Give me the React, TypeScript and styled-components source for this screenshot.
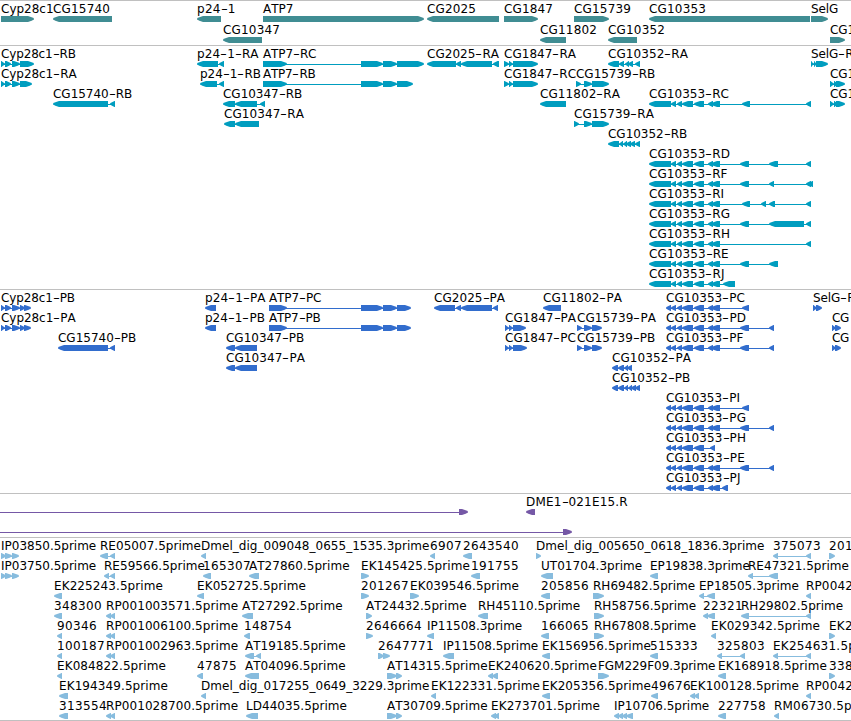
import React from "react";
import styled, { createGlobalStyle } from "styled-components";

const GlobalStyle = createGlobalStyle`
  html, body { margin: 0; padding: 0; background: #fff; overflow: hidden; }
`;

const Browser = styled.main`
  width: 851px;
  height: 721px;
  overflow: hidden;
  display: flex;
  flex-direction: column;
  background: #fff;
  border-bottom: 1px solid #c0c0c0;
  box-sizing: border-box;
`;

const TrackPanel = styled.section<{ $pad: number }>`
  display: flex;
  flex-direction: column;
  flex: none;
  border-top: 1px solid #c0c0c0;
  padding-bottom: ${(p) => p.$pad}px;
`;

const Lane = styled.div<{ $height: number }>`
  display: grid;
  grid-template-columns: minmax(0, 1fr);
  height: ${(p) => p.$height}px;
`;

const FeatureBox = styled.div<{ $x: number }>`
  grid-area: 1 / 1;
  margin-left: ${(p) => p.$x}px;
  display: flex;
  flex-direction: column;
  align-items: flex-start;
`;

const Label = styled.span<{ $tracking: string }>`
  height: 15px;
  line-height: 17px;
  font-family: "DejaVu Sans", sans-serif;
  font-size: 12px;
  font-kerning: none;
  letter-spacing: ${(p) => p.$tracking}px;
  color: #000;
  white-space: pre;
`;

const Dash = styled.span`
  display: inline-block;
  width: 7px;
  transform: scaleX(1.6);
  transform-origin: 0 50%;
`;

const Glyph = styled.svg`
  display: block;
  flex: none;
  height: 6px;
`;

type Strand = "+" | "-";
type Feature = { name: string; strand: Strand; blocks: number[][] };

/* Parses "name|strand|start:end,start:end" into a feature. */
const parse = (line: string): Feature => {
  const [name, strand, spans] = line.split("|");
  return {
    name,
    strand: strand as Strand,
    blocks: spans.split(",").map((s) => s.split(":").map(Number)),
  };
};

/* Advance corrections per character, spread evenly over a label. */
const advance: Record<string, number> = {
  _: -0.3, C: -0.38, G: -0.3, y: -0.1, c: -0.6, R: -0.34, P: -0.24, B: -1,
  I: -0.5, A: -0.2, E: 0.2, K: 0.1, D: -0.24, F: -0.5, m: -1.6,
};

const tracking = (name: string) => {
  const chars = name.replace(/-/g, "").split("");
  const extra = chars.reduce((sum, c) => sum + (/\d/.test(c) ? 0.37 : advance[c] ?? 0), 0);
  return (extra / Math.max(1, chars.length)).toFixed(2);
};

const blockPoints = (a: number, b: number, strand: Strand) => {
  const small = b - a <= 6;
  const head = small ? Math.min(5, b - a) - 0.5 : 6;
  const mid = small ? 2 : 2.4;
  const inset = small ? 1.3 : 1.3;
  const [tip, back, dir] = strand === "+" ? [b, a, -1] : [a, b, 1];
  return [
    [back, 0],
    [tip + dir * head, 0],
    [tip + dir * mid, inset],
    [tip, 2.6],
    [tip, 3.6],
    [tip + dir * mid, 6 - inset],
    [tip + dir * head, 6],
    [back, 6],
  ]
    .map((p) => p.join(","))
    .join(" ");
};

const FeatureView = ({ feature, color }: { feature: Feature; color: string }) => {
  const { name, strand, blocks } = feature;
  const x = blocks[0][0];
  const end = blocks[blocks.length - 1][1];
  return (
    <FeatureBox $x={x}>
      <Label $tracking={tracking(name)}>
        {name.split("-").map((part, i) => (
          <React.Fragment key={i}>
            {i > 0 && <Dash>-</Dash>}
            {part}
          </React.Fragment>
        ))}
      </Label>
      <Glyph width={end - x} height={6} viewBox={`0 0 ${end - x} 6`} fill={color}>
        {blocks.length > 1 && <rect x={1} y={3} width={end - x - 2} height={1} />}
        {blocks.map(([a, b], i) => (
          <polygon key={i} points={blockPoints(a - x, b - x, strand)} />
        ))}
      </Glyph>
    </FeatureBox>
  );
};

const CYP = "1:5,5:11,12:20";
const R353 = "649:671,671:676,677:682,682:693,694:704,708:713,711:720";
const P353 = "666:671,671:676,677:682,682:693,694:704,708:713,711:720";
const CG1 = "830:834,834:838,836:845";
const RP = "106:111,110:115";

const tracks: { color: string; lane: number; pad: number; lanes: string[][] }[] = [
  {
    color: "#408d93",
    lane: 21,
    pad: 2,
    lanes: [
      ["Cyp28c1|+|1:34", "CG15740|-|53:112", "p24-1|-|197:221", "ATP7|+|263:424", "CG2025|-|427:499", "CG1847|+|504:538", "CG15739|+|574:609", "CG10353|-|649:810", "SelG|+|811:828"],
      ["CG10347|-|223:262", "CG11802|-|540:566", "CG10352|-|608:637", "CG1|+|830:845"],
    ],
  },
  {
    color: "#009dbf",
    lane: 20,
    pad: 3,
    lanes: [
      [`Cyp28c1-RB|+|${CYP},20:34`, "p24-1-RA|-|197:218,219:224", "ATP7-RC|+|263:287,361:383,383:397,397:424", "CG2025-RA|-|427:456,456:461,461:492,493:499", "CG1847-RA|+|504:509,509:513,513:538", "CG10352-RA|-|608:619,619:624,625:629,628:633,635:640", "SelG-R|+|811:814,814:817,816:828"],
      [`Cyp28c1-RA|+|${CYP},20:32`, "p24-1-RB|-|200:217,219:224", "ATP7-RB|+|263:287,361:383,383:397,397:413", "CG1847-RC|+|504:509,509:513,513:538", "CG15739-RB|+|576:581,584:592,592:609", `CG1|+|${CG1}`],
      ["CG15740-RB|-|53:108,110:115", "CG10347-RB|-|223:235,235:257,260:265", "CG11802-RA|-|540:566", `CG10353-RC|-|${R353},742:750,806:811`, `CG1|+|${CG1}`],
      ["CG10347-RA|-|224:235,235:259", "CG15739-RA|+|574:579,584:592,592:609"],
      ["CG10352-RB|-|608:619,619:623,623:627,626:631,630:635,635:640"],
      [`CG10353-RD|-|${R353},740:749,769:778,806:811`],
      [`CG10353-RF|-|${R353},740:749,769:774,806:811,808:813`],
      [`CG10353-RI|-|${R353},742:750,761:766,769:775,806:811`],
      [`CG10353-RG|-|${R353},740:749,769:804,806:811`],
      [`CG10353-RH|-|${R353},806:811`],
      [`CG10353-RE|-|${R353},740:749,769:778`],
      [`CG10353-RJ|-|${R353},723:735`],
    ],
  },
  {
    color: "#326dcd",
    lane: 20,
    pad: 3,
    lanes: [
      [`Cyp28c1-PB|+|${CYP},20:25,24:31`, "p24-1-PA|-|205:216", "ATP7-PC|+|269:287,361:383,383:397,397:411", "CG2025-PA|-|434:455,456:461,461:492,493:498", "CG11802-PA|-|543:561", `CG10353-PC|-|${P353},742:749`, "SelG-P|+|813:817,816:822"],
      [`Cyp28c1-PA|+|${CYP},20:25,24:31`, "p24-1-PB|-|205:216", "ATP7-PB|+|269:287,361:383,383:397,397:411", "CG1847-PA|+|505:509,509:513,513:526", "CG15739-PA|+|577:582,584:592,592:602", `CG10353-PD|-|${P353},740:749,769:774`, "CG|+|832:836,835:841"],
      ["CG15740-PB|-|58:108,110:115", "CG10347-PB|-|226:235,235:257", "CG1847-PC|+|505:509,509:513,513:527", "CG15739-PB|+|577:582,584:592,592:602", `CG10353-PF|-|${P353},740:749,769:774`, "CG|+|832:836,835:841"],
      ["CG10347-PA|-|226:235,235:257", "CG10352-PA|-|612:618,618:624,624:628,627:632"],
      ["CG10352-PB|-|612:618,618:624,624:628,628:632,631:636,635:640"],
      [`CG10353-PI|-|${P353},742:749`],
      [`CG10353-PG|-|${P353},740:749,769:774`],
      ["CG10353-PH|-|666:671,671:676,677:682,682:693,694:704,710:715"],
      [`CG10353-PE|-|${P353},740:749,769:774`],
      [`CG10353-PJ|-|${P353},722:728`],
    ],
  },
  {
    color: "#7558a6",
    lane: 20,
    pad: 3,
    lanes: [
      ["|+|-5:-1,459:468", "DME1-021E15.R|-|526:535"],
      ["|+|-5:-1,563:572"],
    ],
  },
  {
    color: "#87bcde",
    lane: 20,
    pad: 2,
    lanes: [
      ["IP03850.5prime|+|1:6,5:12,12:19", "RE05007.5prime|-|100:108,110:115", "Dmel_dig_009048_0655_1535.3prime|-|201:206", "6907|-|430:435", "2643540|-|463:472", "Dmel_dig_005650_0618_1836.3prime|+|536:541", "375073|-|773:778,806:811", "201|+|829:835"],
      ["IP03750.5prime|+|1:6,5:12,12:19", "RE59566.5prime|-|104:109,110:115", "165307|-|203:211", "AT27860.5prime|-|249:259", "EK145425.5prime|+|361:369", "191755|-|471:480", "UT01704.3prime|-|541:553", "EP19838.3prime|-|650:658", "RE47321.5prime|-|748:753,769:778"],
      ["EK225243.5prime|-|54:62", "EK052725.5prime|-|197:204", "201267|+|361:369", "EK039546.5prime|+|410:419", "205856|-|541:550", "RH69482.5prime|+|593:604", "EP18505.3prime|-|699:704,707:715", "RP0042|-|806:811"],
      ["348300|-|54:62", `RP001003571.5prime|-|${RP}`, "AT27292.5prime|-|242:253", "AT24432.5prime|+|366:372", "RH45110.5prime|-|478:488", "RH58756.5prime|+|594:604", "22321|-|703:708,707:715", "RH29802.5prime|-|741:749,806:811"],
      ["90346|-|57:62", `RP001006100.5prime|-|${RP}`, "148754|-|244:250", "2646664|+|366:373", "IP11508.3prime|-|427:434", "166065|-|541:549", "RH67808.5prime|+|594:604", "EK029342.5prime|-|711:716", "EK2|+|829:835"],
      ["100187|-|57:62", `RP001002963.5prime|-|${RP}`, "AT19185.5prime|-|245:254,256:261", "2647771|+|378:384,383:390", "IP11508.5prime|-|443:454", "EK156956.5prime|-|542:550", "515333|-|650:658", "325803|-|717:722,740:745", "EK254631.5p|-|773:778,806:811"],
      ["EK084822.5prime|-|57:62", "47875|-|197:203", "AT04096.5prime|-|245:259", "AT14315.5prime|+|387:397,396:402", "EK240620.5prime|-|488:493,492:498", "FGM229F09.3prime|+|598:609", "EK168918.5prime|-|718:726", "338|+|829:835"],
      ["EK194349.5prime|-|59:68", "Dmel_dig_017255_0649_3229.3prime|-|201:206", "EK122331.5prime|-|431:436", "EK205356.5prime|-|542:550", "49676|-|651:658", "EK100128.5prime|-|690:695,694:699", "RP0042|-|806:811"],
      ["313554|-|59:68", `RP001028700.5prime|-|${RP}`, "LD44035.5prime|-|246:258", "AT30709.5prime|+|387:397,396:402", "EK273701.5prime|-|491:496,494:499", "IP10706.5prime|-|614:619,618:623,622:627,626:633", "227758|-|718:726", "RM06730.5p|-|774:779"],
    ],
  },
];

export default function App() {
  return (
    <>
      <GlobalStyle />
      <Browser>
        {tracks.map((track, t) => (
          <TrackPanel key={t} $pad={track.pad}>
            {track.lanes.map((lane, l) => (
              <Lane key={l} $height={track.lane}>
                {lane.map((line, i) => (
                  <FeatureView key={i} feature={parse(line)} color={track.color} />
                ))}
              </Lane>
            ))}
          </TrackPanel>
        ))}
      </Browser>
    </>
  );
}
